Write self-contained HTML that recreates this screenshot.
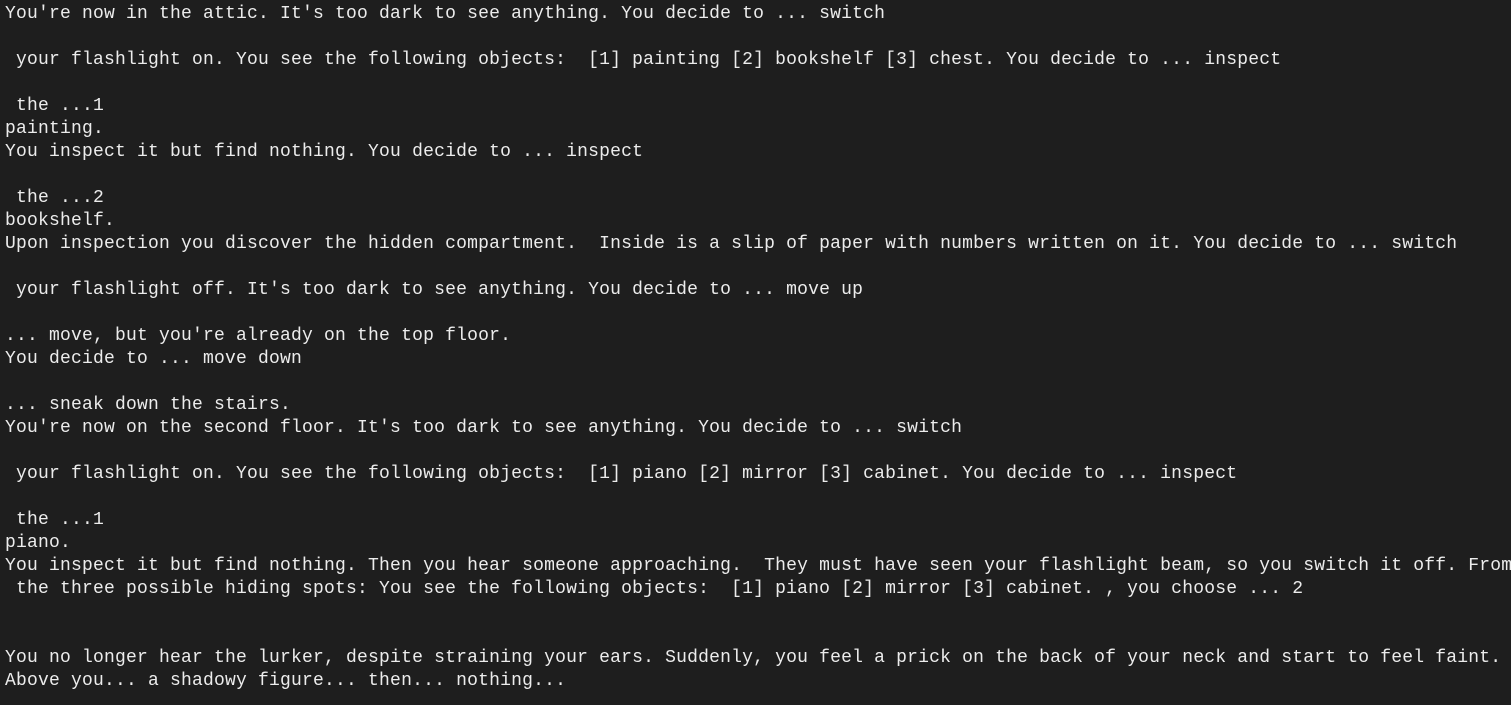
<!DOCTYPE html>
<html><head><meta charset="utf-8"><style>
html,body{margin:0;padding:0;background:#1e1e1e;width:1511px;height:705px;overflow:hidden}
pre{margin:0;padding:3px 0 0 5px;font-family:"Liberation Mono",monospace;font-size:18px;letter-spacing:0.2px;line-height:23px;color:#ececec;white-space:pre}
</style></head><body><pre>You're now in the attic. It's too dark to see anything. You decide to ... switch

 your flashlight on. You see the following objects:  [1] painting [2] bookshelf [3] chest. You decide to ... inspect

 the ...1
painting.
You inspect it but find nothing. You decide to ... inspect

 the ...2
bookshelf.
Upon inspection you discover the hidden compartment.  Inside is a slip of paper with numbers written on it. You decide to ... switch

 your flashlight off. It's too dark to see anything. You decide to ... move up

... move, but you're already on the top floor.
You decide to ... move down

... sneak down the stairs.
You're now on the second floor. It's too dark to see anything. You decide to ... switch

 your flashlight on. You see the following objects:  [1] piano [2] mirror [3] cabinet. You decide to ... inspect

 the ...1
piano.
You inspect it but find nothing. Then you hear someone approaching.  They must have seen your flashlight beam, so you switch it off. From
 the three possible hiding spots: You see the following objects:  [1] piano [2] mirror [3] cabinet. , you choose ... 2


You no longer hear the lurker, despite straining your ears. Suddenly, you feel a prick on the back of your neck and start to feel faint.
Above you... a shadowy figure... then... nothing...</pre></body></html>
